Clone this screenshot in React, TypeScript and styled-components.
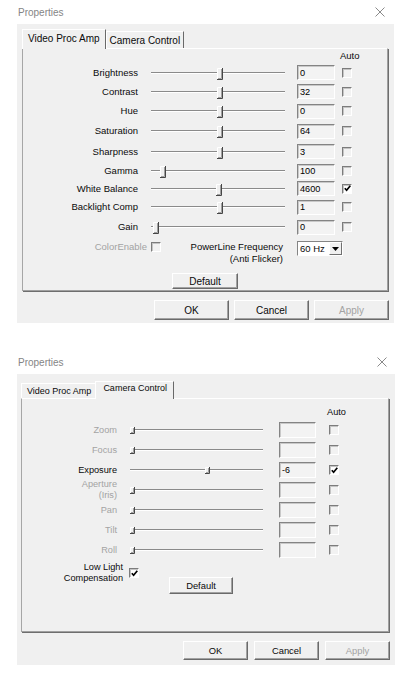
import React, { FC } from 'react'
import styled, { createGlobalStyle, ThemeProvider, useTheme } from 'styled-components'

type Metrics = {
  tabFs: number
  fs: number
  lh: number
  btnFs: number
  stripH: number
  tabH: number
  activeTabH: number
  tabPt: number
  activeTabPt: number
  panelH: number
  labelW: number
  sliderMl: number
  sliderW: number
  trackInset: number
  boxMl: number
  boxW: number
  boxH: number
  cbMl: number
  thumbW: number
  thumbH: number
  thumbUp: number
  btnW: number
  btnH: number
  btnGap: number
}

const large: Metrics = {
  tabFs: 10,
  fs: 9.5,
  lh: 12,
  btnFs: 10,
  stripH: 19,
  tabH: 17,
  activeTabH: 20,
  tabPt: 3,
  activeTabPt: 3,
  panelH: 243,
  labelW: 115,
  sliderMl: 9,
  sliderW: 142,
  trackInset: 4,
  boxMl: 8,
  boxW: 38,
  boxH: 15,
  cbMl: 7,
  thumbW: 6,
  thumbH: 12,
  thumbUp: 4,
  btnW: 75,
  btnH: 20,
  btnGap: 5
}

const compact: Metrics = {
  tabFs: 9,
  fs: 9.2,
  lh: 11,
  btnFs: 9.4,
  stripH: 17,
  tabH: 15,
  activeTabH: 18,
  tabPt: 2,
  activeTabPt: 1,
  panelH: 234,
  labelW: 95,
  sliderMl: 9,
  sliderW: 141,
  trackInset: 4,
  boxMl: 12,
  boxW: 37,
  boxH: 16,
  cbMl: 13,
  thumbW: 5,
  thumbH: 7,
  thumbUp: 2,
  btnW: 65,
  btnH: 19,
  btnGap: 6
}

type T = { theme: Metrics }

const GlobalStyle = createGlobalStyle`
  html, body {
    margin: 0;
    padding: 0;
    background: #fff;
  }
  body {
    font-family: 'Liberation Sans', Arial, sans-serif;
    color: #0a0a0a;
  }
`

const Page = styled.div`
  width: 416px;
  box-sizing: border-box;
  padding-left: 17px;
  display: flex;
  flex-direction: column;
  gap: 27px;
`

const Window = styled.div<{ $w: number }>`
  width: ${({ $w }) => $w}px;
`

const TitleBar = styled.div<{ $pr: number }>`
  height: 24px;
  display: flex;
  align-items: center;
  justify-content: space-between;
  padding: 0 ${({ $pr }) => $pr}px 0 1px;
  color: #858585;
  font-size: 10px;
`

const Body = styled.div<{ $pad: string }>`
  background: #f0f0f0;
  padding: ${({ $pad }) => $pad};
  display: flex;
  flex-direction: column;
`

const TabStrip = styled.div`
  height: ${({ theme }: T) => theme.stripH}px;
  display: flex;
  align-items: flex-end;
`

const Tab = styled.div<{ $active?: boolean; $pl: number; $pr: number }>`
  box-sizing: border-box;
  height: ${({ theme, $active }: T & { $active?: boolean }) =>
    $active ? theme.activeTabH : theme.tabH}px;
  padding: ${({ theme, $active }: T & { $active?: boolean }) =>
      $active ? theme.activeTabPt : theme.tabPt}px
    ${({ $pr }) => $pr}px 0 ${({ $pl }) => $pl}px;
  margin-bottom: ${({ $active }) => ($active ? -1 : 0)}px;
  margin-left: ${({ $active, $pl }) => ($active && $pl > 6 ? -2 : 0)}px;
  font-size: ${({ theme }: T) => theme.tabFs}px;
  line-height: ${({ theme }: T) => theme.lh}px;
  white-space: nowrap;
  background: #f0f0f0;
  border-top: 1px solid #fff;
  border-left: 1px solid #fff;
  border-right: 1px solid #696969;
  position: relative;
  z-index: ${({ $active }) => ($active ? 2 : 1)};
`

const Panel = styled.div`
  height: ${({ theme }: T) => theme.panelH}px;
  box-sizing: border-box;
  border-top: 1px solid #fff;
  border-left: 1px solid #a6a6a6;
  border-right: 1px solid #a0a0a0;
  border-bottom: 1px solid #a0a0a0;
  box-shadow: 1px 1px 0 #6e6e6e;
  display: flex;
  flex-direction: column;
`

const Row = styled.div<{ $h: number }>`
  height: ${({ $h }) => $h}px;
  display: flex;
  align-items: center;
`

const Label = styled.div<{ $off?: boolean; $w?: number }>`
  width: ${({ theme, $w }: T & { $w?: number }) => $w ?? theme.labelW}px;
  flex-shrink: 0;
  text-align: right;
  font-size: ${({ theme }: T) => theme.fs}px;
  line-height: ${({ theme }: T) => theme.lh}px;
  color: ${({ $off }) => ($off ? '#a3a3a3' : '#0a0a0a')};
  white-space: nowrap;
`

const AutoHead = styled.div`
  margin-left: ${({ theme }: T) =>
    theme.labelW +
    theme.sliderMl +
    theme.sliderW +
    theme.boxMl +
    theme.boxW +
    theme.cbMl -
    2}px;
  font-size: ${({ theme }: T) => theme.fs}px;
  line-height: ${({ theme }: T) => theme.lh}px;
`

const Slider = styled.div`
  margin-left: ${({ theme }: T) => theme.sliderMl}px;
  width: ${({ theme }: T) => theme.sliderW}px;
  height: 100%;
  position: relative;
  display: flex;
  align-items: center;
`

const Track = styled.div`
  height: 2px;
  width: 100%;
  box-sizing: border-box;
  margin: 0 ${({ theme }: T) => theme.trackInset}px;
  border-top: 1px solid #8a8a8a;
  border-bottom: 1px solid #fff;
`

const ThumbSpot = styled.span`
  position: absolute;
  top: calc(50% - ${({ theme }: T) => theme.thumbUp + 1}px);
  display: flex;
`

const ValueBox = styled.div`
  margin-left: ${({ theme }: T) => theme.boxMl}px;
  width: ${({ theme }: T) => theme.boxW}px;
  height: ${({ theme }: T) => theme.boxH}px;
  flex-shrink: 0;
  box-sizing: border-box;
  border: 1px solid;
  border-color: #848484 #fff #fff #848484;
  box-shadow: inset 1px 1px 0 #c9c9c9;
  background: #f3f3f3;
  padding-left: 2px;
  display: flex;
  align-items: center;
  font-size: ${({ theme }: T) => theme.fs - 0.3}px;
  color: #000;
`

const Check = styled.span<{ $on?: boolean; $ml?: number; $mt?: number }>`
  margin-left: ${({ theme, $ml }: T & { $ml?: number }) => $ml ?? theme.cbMl}px;
  margin-top: ${({ $mt }) => $mt ?? 0}px;
  width: 10px;
  height: 10px;
  flex-shrink: 0;
  box-sizing: border-box;
  border-top: 1px solid #7c7c7c;
  border-left: 1px solid #7c7c7c;
  border-right: 1px solid #fff;
  border-bottom: 1px solid #fff;
  box-shadow: inset 1px 1px 0 #c4c4c4;
  background: ${({ $on }) => ($on ? '#fff' : '#f2f2f2')};
  display: flex;
  align-items: center;
  justify-content: center;
`

const OptionRow = styled.div`
  margin-top: 4px;
  height: 24px;
  display: flex;
  align-items: flex-start;
`

const Select = styled.div`
  margin-left: 14px;
  width: 46px;
  height: 15px;
  box-sizing: border-box;
  border: 1px solid;
  border-color: #848484 #fff #fff #848484;
  background: #fff;
  display: flex;
  align-items: center;
  padding-left: 2px;
  font-size: ${({ theme }: T) => theme.fs}px;
`

const SelectArrow = styled.span`
  margin-left: auto;
  width: 13px;
  height: 13px;
  box-sizing: border-box;
  background: #f0f0f0;
  border: 1px solid;
  border-color: #fff #707070 #707070 #fff;
  display: flex;
  align-items: center;
  justify-content: center;
`

const Button = styled.button<{ $w?: number; $h?: number; $off?: boolean }>`
  width: ${({ theme, $w }: T & { $w?: number }) => $w ?? theme.btnW}px;
  height: ${({ theme, $h }: T & { $h?: number }) => $h ?? theme.btnH}px;
  flex-shrink: 0;
  box-sizing: border-box;
  padding: 0;
  font-family: inherit;
  font-size: ${({ theme }: T) => theme.btnFs}px;
  color: ${({ $off }) => ($off ? '#a3a3a3' : '#0a0a0a')};
  background: #f0f0f0;
  border: 1px solid;
  border-color: #fff #6a6a6a #6a6a6a #fff;
  box-shadow: inset -1px -1px 0 #a2a2a2;
`

const DefaultWrap = styled.div`
  margin-top: 8px;
  display: flex;
  justify-content: center;
`

const LowLightRow = styled.div`
  margin-top: 2px;
  display: flex;
  align-items: flex-start;
`

const PushedButton = styled(Button)`
  margin-left: 30px;
  margin-top: 15px;
`

const ButtonRow = styled.div`
  margin-top: 9px;
  margin-right: -1px;
  display: flex;
  justify-content: flex-end;
  gap: ${({ theme }: T) => theme.btnGap}px;
`

const CloseIcon: FC = () => (
  <svg width="10" height="10" viewBox="0 0 10 10">
    <path d="M0.5 0.5 L9.5 9.5 M9.5 0.5 L0.5 9.5" stroke="#8a8a8a" strokeWidth="1" fill="none" />
  </svg>
)

const Tick: FC = () => (
  <svg width="7" height="7" viewBox="0 0 7 7">
    <path d="M0.8 3.2 L2.6 5.2 L6.3 0.8" stroke="#000" strokeWidth="1.7" fill="none" />
  </svg>
)

const Thumb: FC<{ at: number }> = ({ at }) => {
  const m = useTheme() as Metrics
  const w = m.thumbW
  const h = m.thumbH
  return (
    <ThumbSpot style={{ left: m.trackInset + at }}>
      <svg width={w} height={h} viewBox={`0 0 ${w} ${h}`}>
        <rect x="0" y="0" width={w} height={h} fill="#f0f0f0" />
        <path d={`M0.5 ${h} V0.5 H${w - 1}`} stroke="#fff" fill="none" />
        <path d={`M${w - 1.5} 1 V${h - 1.5} H1`} stroke="#a0a0a0" fill="none" />
        <path d={`M${w - 0.5} 0 V${h - 0.5} H0`} stroke="#464646" fill="none" />
      </svg>
    </ThumbSpot>
  )
}

type Control = {
  name: string[]
  value: string
  at: number
  auto?: boolean
  off?: boolean
  h: number
}

const ControlRow: FC<{ c: Control }> = ({ c }) => (
  <Row $h={c.h}>
    <Label $off={c.off}>
      {c.name.map((line) => (
        <div key={line}>{line}</div>
      ))}
    </Label>
    <Slider>
      <Track />
      <Thumb at={c.at} />
    </Slider>
    <ValueBox>{c.value}</ValueBox>
    <Check $on={c.auto}>{c.auto && <Tick />}</Check>
  </Row>
)

const procAmp: Control[] = [
  { name: ['Brightness'], value: '0', at: 66, h: 19 },
  { name: ['Contrast'], value: '32', at: 66, h: 19 },
  { name: ['Hue'], value: '0', at: 66, h: 20 },
  { name: ['Saturation'], value: '64', at: 66, h: 20 },
  { name: ['Sharpness'], value: '3', at: 66, h: 21 },
  { name: ['Gamma'], value: '100', at: 9, h: 18 },
  { name: ['White Balance'], value: '4600', at: 65, auto: true, h: 17 },
  { name: ['Backlight Comp'], value: '1', at: 66, h: 20 },
  { name: ['Gain'], value: '0', at: 2, h: 20 }
]

const cameraControl: Control[] = [
  { name: ['Zoom'], value: '', at: 0, off: true, h: 20 },
  { name: ['Focus'], value: '', at: 0, off: true, h: 20 },
  { name: ['Exposure'], value: '-6', at: 75, auto: true, h: 20 },
  { name: ['Aperture', '(Iris)'], value: '', at: 0, off: true, h: 20 },
  { name: ['Pan'], value: '', at: 0, off: true, h: 20 },
  { name: ['Tilt'], value: '', at: 0, off: true, h: 20 },
  { name: ['Roll'], value: '', at: 0, off: true, h: 20 }
]

const DialogButtons: FC = () => (
  <ButtonRow>
    <Button>OK</Button>
    <Button>Cancel</Button>
    <Button $off>Apply</Button>
  </ButtonRow>
)

const ProcAmpDialog: FC = () => (
  <ThemeProvider theme={large}>
    <Window $w={377}>
      <TitleBar $pr={9}>
        <span>Properties</span>
        <CloseIcon />
      </TitleBar>
      <Body $pad="5px 6px 3px 5px">
        <TabStrip>
          <Tab $active $pl={5} $pr={5}>
            Video Proc Amp
          </Tab>
          <Tab $pl={3} $pr={3}>
            Camera Control
          </Tab>
        </TabStrip>
        <Panel>
          <Row $h={14}>
            <AutoHead>Auto</AutoHead>
          </Row>
          {procAmp.map((c) => (
            <ControlRow key={c.name[0]} c={c} />
          ))}
          <OptionRow>
            <Label $off $w={124}>
              ColorEnable
            </Label>
            <Check $ml={4} $mt={1} />
            <Label $w={122}>
              <div>PowerLine Frequency</div>
              <div>(Anti Flicker)</div>
            </Label>
            <Select>
              60 Hz
              <SelectArrow>
                <svg width="7" height="4" viewBox="0 0 7 4">
                  <path d="M0 0 H7 L3.5 4 Z" fill="#000" />
                </svg>
              </SelectArrow>
            </Select>
          </OptionRow>
          <DefaultWrap>
            <Button $w={66} $h={16}>
              Default
            </Button>
          </DefaultWrap>
        </Panel>
        <DialogButtons />
      </Body>
    </Window>
  </ThemeProvider>
)

const CameraDialog: FC = () => (
  <ThemeProvider theme={compact}>
    <Window $w={378}>
      <TitleBar $pr={8}>
        <span>Properties</span>
        <CloseIcon />
      </TitleBar>
      <Body $pad="7px 6px 5px 4px">
        <TabStrip>
          <Tab $pl={5} $pr={5}>
            Video Proc Amp
          </Tab>
          <Tab $active $pl={7} $pr={6}>
            Camera Control
          </Tab>
        </TabStrip>
        <Panel>
          <Row $h={16} style={{ marginTop: 5 }}>
            <AutoHead>Auto</AutoHead>
          </Row>
          {cameraControl.map((c) => (
            <ControlRow key={c.name[0]} c={c} />
          ))}
          <LowLightRow>
            <Label $w={101}>
              <div>Low Light</div>
              <div>Compensation</div>
            </Label>
            <Check $on $ml={6} $mt={6}>
              <Tick />
            </Check>
            <PushedButton $w={64} $h={17}>
              Default
            </PushedButton>
          </LowLightRow>
        </Panel>
        <DialogButtons />
      </Body>
    </Window>
  </ThemeProvider>
)

export default function App() {
  return (
    <>
      <GlobalStyle />
      <Page>
        <ProcAmpDialog />
        <CameraDialog />
      </Page>
    </>
  )
}
